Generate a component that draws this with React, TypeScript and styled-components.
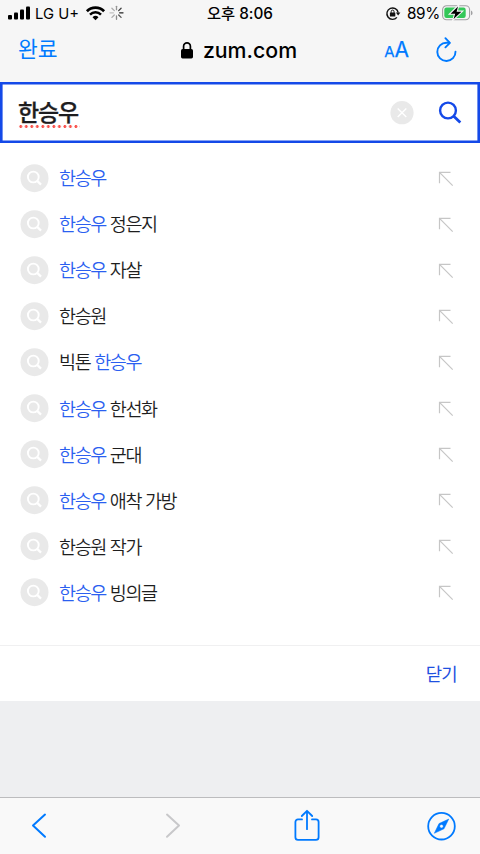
import React from 'react';
import styled, { createGlobalStyle } from 'styled-components';

const GlobalStyle = createGlobalStyle`
  * { box-sizing: border-box; }
  html, body { margin: 0; padding: 0; overflow: hidden; }
  body {
    font-family: Inter, "Noto Sans CJK KR", sans-serif;
    background: #eeeff1;
    -webkit-font-smoothing: antialiased;
  }
  svg { display: block; flex: none; overflow: visible; }
`;

const Screen = styled.div`
  width: 480px;
  height: 854px;
  display: flex;
  flex-direction: column;
  background: #eeeff1;
`;

const Chrome = styled.header`
  height: 82px;
  background: #f6f6f6;
  color: #000;
`;

const StatusBar = styled.div`
  height: 27px;
  display: grid;
  grid-template-columns: 160px 160px 160px;
  align-items: center;
  white-space: nowrap;
`;

const StatusLeft = styled.div`
  display: flex;
  align-items: center;
  padding-left: 8px;
`;

const StatusRight = styled.div`
  display: flex;
  align-items: center;
  justify-content: flex-end;
  padding-right: 7px;
`;

const Carrier = styled.span`
  margin: 0 6px 0 5px;
  font-size: 14.8px;
  line-height: 26px;
  width: 45px;
`;

const SpinnerSlot = styled.span`
  display: flex;
  margin-right: 37px;
`;

const Clock = styled.div`
  text-align: center;
  font-size: 15.3px;
  font-weight: 500;
  line-height: 27px;
`;

const Percent = styled.span`
  font-size: 15.3px;
  line-height: 27px;
  letter-spacing: -0.3px;
  margin: 0 2px 0 7px;
`;

const NavBar = styled.nav`
  height: 46px;
  display: grid;
  grid-template-columns: 160px 160px 160px;
  align-items: center;
`;

const Done = styled.span`
  padding-left: 18px;
  color: #007aff;
  font-size: 21.5px;
  line-height: 44px;
  margin-top: -4px;
`;

const Address = styled.div`
  display: flex;
  align-items: center;
  justify-content: center;
  gap: 10px;
  padding-right: 2px;
  font-size: 21.3px;
  font-weight: 500;
  line-height: 44px;
`;

const Domain = styled.span`
  margin-top: -3px;
`;

const NavTools = styled.div`
  display: flex;
  align-items: center;
  justify-content: flex-end;
  gap: 27px;
  padding-right: 23px;
  color: #007aff;
`;

const TextSize = styled.span`
  display: flex;
  align-items: baseline;
  line-height: 46px;
  font-size: 21px;
  -webkit-text-stroke: 0.25px #007aff;
`;

const SmallA = styled.span`
  font-size: 15px;
`;

const SearchBox = styled.div`
  height: 61px;
  border: 2px solid #1449e8;
  box-shadow: inset 0 0 0 0.6px #1449e8;
  background: #fff;
  display: flex;
  align-items: center;
  padding: 0 17px 0 16px;
`;

const Query = styled.span`
  width: 62px;
  height: 30px;
  margin-top: 1px;
  font-family: "Noto Sans CJK KR", sans-serif;
  font-size: 23px;
  font-weight: 500;
  line-height: 27px;
  letter-spacing: -1.1px;
  color: #1d1d1f;
  -webkit-text-stroke: 0.3px #1d1d1f;
  white-space: nowrap;
  background: radial-gradient(circle at 2.75px 1.5px, #f9544e 1.1px, transparent 1.8px) 0 27px / 5.52px 3px repeat-x;
`;

const Spacer = styled.div`
  flex: 1;
`;

const Clear = styled.span`
  display: flex;
  margin-right: 25px;
`;

const Panel = styled.main`
  height: 558px;
  background: #fff;
  display: flex;
  flex-direction: column;
`;

const Suggestions = styled.ul`
  list-style: none;
  margin: 0;
  padding: 12px 27px 0 20px;
  height: 502px;
`;

const Suggestion = styled.li`
  height: 46.1px;
  display: flex;
  align-items: center;
`;

const Label = styled.span`
  flex: 1;
  padding-left: 10px;
  font-family: "Noto Sans CJK KR", sans-serif;
  font-size: 18.5px;
  font-weight: 350;
  line-height: 44px;
  margin-top: -2px;
  letter-spacing: -1.37px;
  word-spacing: 1.1px;
  color: #1e1e1e;
  white-space: pre;
`;

const Match = styled.span`
  color: #2b5ff0;
`;

const PanelFooter = styled.div`
  height: 56px;
  border-top: 1.5px solid #f0f0f1;
  display: flex;
  align-items: center;
  justify-content: flex-end;
  padding: 0 23px 2px 0;
  font-family: "Noto Sans CJK KR", sans-serif;
  font-size: 17.8px;
  font-weight: 400;
  letter-spacing: -0.7px;
  color: #1f50e0;
`;

const Toolbar = styled.footer`
  margin-top: auto;
  height: 57px;
  border-top: 1px solid #bcbcbe;
  background: #f9f9f9;
  display: flex;
  align-items: center;
  justify-content: space-between;
  padding: 0 24px;
`;

const ToolButton = styled.span`
  width: 29px;
  display: flex;
  justify-content: center;
`;

type Part = { text: string; match?: boolean };

const hit = (text: string): Part => ({ text, match: true });
const rest = (text: string): Part => ({ text });

const suggestions: Part[][] = [
  [hit('한승우')],
  [hit('한승우'), rest(' 정은지')],
  [hit('한승우'), rest(' 자살')],
  [rest('한승원')],
  [rest('빅톤 '), hit('한승우')],
  [hit('한승우'), rest(' 한선화')],
  [hit('한승우'), rest(' 군대')],
  [hit('한승우'), rest(' 애착 가방')],
  [rest('한승원 작가')],
  [hit('한승우'), rest(' 빙의글')],
];

const SignalIcon = () => (
  <svg width="22" height="14" viewBox="0 0 22 14">
    <rect x="0" y="8" width="4" height="4.5" rx="1" />
    <rect x="6" y="5.5" width="4" height="7" rx="1" />
    <rect x="12" y="2.5" width="4" height="10" rx="1" />
    <rect x="18" y="-0.5" width="4" height="13" rx="1" />
  </svg>
);

const WifiIcon = () => (
  <svg width="19" height="14" viewBox="0 0 19 14" fill="none" stroke="#000">
    <path d="M0.9 4.2A12 12 0 0 1 18.1 4.2" strokeWidth="2.7" />
    <path d="M4 7.6A7.8 7.8 0 0 1 15 7.6" strokeWidth="2.5" />
    <path d="M6.5 10.2A4.3 4.3 0 0 1 12.5 10.2L9.5 13.3Z" fill="#000" stroke="none" />
  </svg>
);

const ticks = [0.45, 0.85, 1, 0.75, 0.5, 0.35, 0.25, 0.35];

const SpinnerIcon = () => (
  <svg width="13" height="13" viewBox="0 0 13 13" stroke="#222" strokeWidth="1.3" strokeLinecap="round">
    {ticks.map((opacity, i) => (
      <path key={i} d="M6.5 0V3.4" opacity={opacity} transform={`translate(0 -0.7) rotate(${i * 45} 6.5 6.5)`} />
    ))}
  </svg>
);

const RotationLockIcon = () => (
  <svg width="14" height="14" viewBox="0 0 14 14" fill="none" stroke="#111" strokeWidth="1.4">
    <path d="M10.9 10.4A5.7 5.7 0 1 1 12.2 5.7" />
    <path d="M9.9 5.4h4.5L12.1 8.4Z" fill="#111" stroke="none" />
    <rect x="3.9" y="5.5" width="5.4" height="3.9" rx="0.5" fill="#111" stroke="none" />
    <path d="M5.2 5.8V4.5a1.4 1.4 0 0 1 2.8 0v1.3" strokeWidth="1" />
  </svg>
);

const BatteryIcon = () => (
  <svg width="31" height="15" viewBox="0 0 31 15">
    <rect x="0.6" y="-0.3" width="27" height="14" rx="4" fill="none" stroke="#a0a0a2" strokeWidth="1.1" />
    <path d="M29 4.5q1.6.6 1.6 2.4T29 9.3Z" fill="#a0a0a2" />
    <rect x="2.3" y="1.5" width="21.4" height="10.5" rx="2.2" fill="#34c759" />
    <path
      d="M16 0.4L8.6 7.7h4.6l-1.6 5.3 7.8-7.3h-4.8Z"
      stroke="#f6f6f6"
      strokeWidth="2.2"
      paintOrder="stroke"
      fill="#000"
    />
  </svg>
);

const LockIcon = () => (
  <svg width="12" height="18" viewBox="0 0 12 18">
    <rect x="0" y="6.9" width="12" height="9.5" rx="1.6" />
    <path d="M2.6 7.4V4.2a3.4 3.4 0 0 1 6.8 0v3.2" fill="none" stroke="#000" strokeWidth="1.7" />
  </svg>
);

const ReloadIcon = () => (
  <svg width="21" height="24" viewBox="0 0 21 24" fill="none" stroke="#007aff" strokeWidth="1.9">
    <path d="M13.3 3.8H10.5A9.1 9.1 0 1 0 19.5 12.6" strokeLinecap="round" />
    <path d="M9.4 -0.8L13.9 3.8 9.4 8.3" strokeLinecap="round" strokeLinejoin="round" />
  </svg>
);

const ClearIcon = () => (
  <svg width="24" height="24" viewBox="0 0 24 24">
    <circle cx="12" cy="11.7" r="11.6" fill="#e9e9e9" />
    <path d="M7.7 7.4l8.6 8.6M16.3 7.4l-8.6 8.6" stroke="#fff" strokeWidth="1.4" />
  </svg>
);

const SearchIcon = () => (
  <svg width="22" height="22" viewBox="0 0 22 22" fill="none" stroke="#1449e8" strokeWidth="2.4">
    <circle cx="9" cy="8.5" r="7.9" />
    <path d="M14.5 14L21.3 20.5" strokeWidth="2.8" />
  </svg>
);

const SuggestIcon = () => (
  <svg width="29" height="29" viewBox="0 0 29 29" fill="none" stroke="#fff" strokeWidth="1.9">
    <circle cx="14.5" cy="14.2" r="14" fill="#e9e9e9" stroke="none" />
    <circle cx="13.3" cy="13" r="5.4" />
    <path d="M17.2 16.9L21 20.6" strokeWidth="2.2" />
  </svg>
);

const InsertIcon = () => (
  <svg width="14" height="15" viewBox="0 0 14 15" fill="none" stroke="#c6c6c6" strokeWidth="1.2">
    <path d="M0.5 12.3V1.3H11.5M0.5 1.3L13.7 14.7" />
  </svg>
);

const BackIcon = () => (
  <svg width="16" height="26" viewBox="0 0 16 26" fill="none" stroke="#007aff" strokeWidth="2" strokeLinecap="round" strokeLinejoin="round">
    <path d="M14 1.6L2 12.6l12 11.1" />
  </svg>
);

const ForwardIcon = () => (
  <svg width="16" height="26" viewBox="0 0 16 26" fill="none" stroke="#c8c8ca" strokeWidth="2" strokeLinecap="round" strokeLinejoin="round">
    <path d="M2 1.6L14 12.6 2 23.7" />
  </svg>
);

const ShareIcon = () => (
  <svg width="26" height="32" viewBox="0 0 26 32" fill="none" stroke="#007aff" strokeWidth="1.8" strokeLinecap="round" strokeLinejoin="round">
    <path d="M8 9.4H4a2.6 2.6 0 0 0-2.6 2.6v15.2A2.6 2.6 0 0 0 4 29.8h18a2.6 2.6 0 0 0 2.6-2.6V12A2.6 2.6 0 0 0 22 9.4h-4" />
    <path d="M13 19.2V0.8M7.8 6L13 0.8l5.2 5.2" />
  </svg>
);

const CompassIcon = () => (
  <svg width="29" height="29" viewBox="0 0 29 29">
    <circle cx="14.5" cy="14.2" r="13.3" fill="none" stroke="#007aff" strokeWidth="1.8" />
    <path
      fill="#007aff"
      fillRule="evenodd"
      d="M21.8 7L17 16.8 7.3 21.3 12 11.6ZM14.5 12.4a1.8 1.8 0 1 0 0 3.6a1.8 1.8 0 1 0 0-3.6Z"
      stroke="#007aff"
      strokeWidth="0.5"
      strokeLinejoin="round"
    />
  </svg>
);

export default function App() {
  return (
    <Screen>
      <GlobalStyle />
      <Chrome>
        <StatusBar>
          <StatusLeft>
            <SignalIcon />
            <Carrier>LG U+</Carrier>
            <WifiIcon />
            <Spacer />
            <SpinnerSlot>
              <SpinnerIcon />
            </SpinnerSlot>
          </StatusLeft>
          <Clock>오후 8:06</Clock>
          <StatusRight>
            <RotationLockIcon />
            <Percent>89%</Percent>
            <BatteryIcon />
          </StatusRight>
        </StatusBar>
        <NavBar>
          <Done>완료</Done>
          <Address>
            <LockIcon />
            <Domain>zum.com</Domain>
          </Address>
          <NavTools>
            <TextSize>
              <SmallA>A</SmallA>
              <span>A</span>
            </TextSize>
            <ReloadIcon />
          </NavTools>
        </NavBar>
      </Chrome>
      <SearchBox>
        <Query>한승우</Query>
        <Spacer />
        <Clear>
          <ClearIcon />
        </Clear>
        <SearchIcon />
      </SearchBox>
      <Panel>
        <Suggestions>
          {suggestions.map((parts, row) => (
            <Suggestion key={row}>
              <SuggestIcon />
              <Label>
                {parts.map((part, i) =>
                  part.match ? <Match key={i}>{part.text}</Match> : <span key={i}>{part.text}</span>,
                )}
              </Label>
              <InsertIcon />
            </Suggestion>
          ))}
        </Suggestions>
        <PanelFooter>닫기</PanelFooter>
      </Panel>
      <Toolbar>
        <ToolButton>
          <BackIcon />
        </ToolButton>
        <ToolButton>
          <ForwardIcon />
        </ToolButton>
        <ToolButton>
          <ShareIcon />
        </ToolButton>
        <ToolButton>
          <CompassIcon />
        </ToolButton>
      </Toolbar>
    </Screen>
  );
}
